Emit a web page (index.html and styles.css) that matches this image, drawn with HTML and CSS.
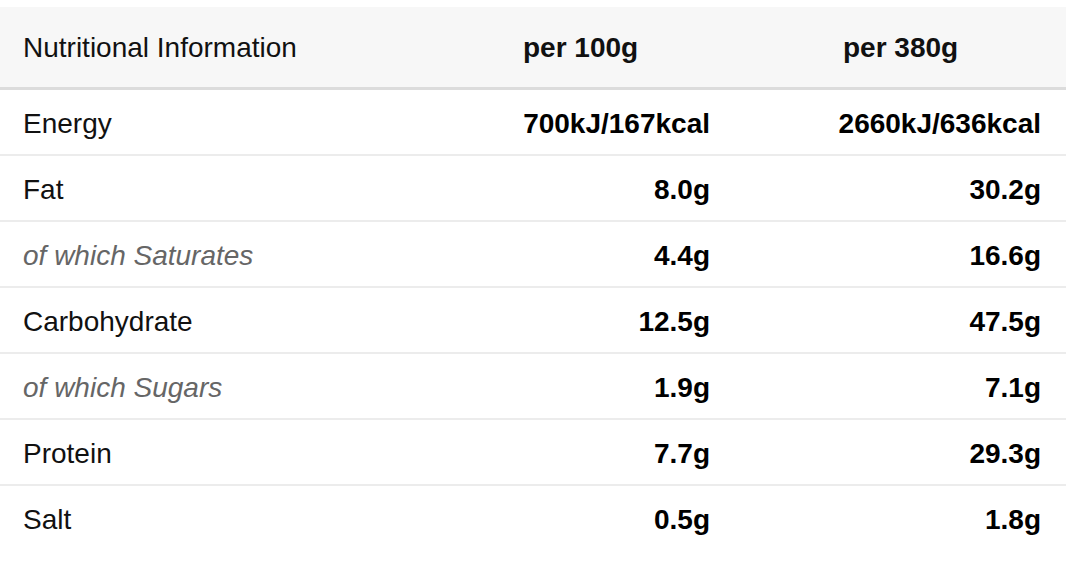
FILE: index.html
```html
<!DOCTYPE html>
<html>
<head>
<meta charset="utf-8">
<link rel="stylesheet" href="styles.css">
</head>
<body>
<div class="nutrition">
  <div class="cell head">Nutritional Information</div>
  <div class="cell head bold">per 100g</div>
  <div class="cell head bold head-last">per 380g</div>

  <div class="cell">Energy</div>
  <div class="cell val">700kJ/167kcal</div>
  <div class="cell val last">2660kJ/636kcal</div>

  <div class="cell">Fat</div>
  <div class="cell val">8.0g</div>
  <div class="cell val last">30.2g</div>

  <div class="cell sub">of which Saturates</div>
  <div class="cell val">4.4g</div>
  <div class="cell val last">16.6g</div>

  <div class="cell">Carbohydrate</div>
  <div class="cell val">12.5g</div>
  <div class="cell val last">47.5g</div>

  <div class="cell sub">of which Sugars</div>
  <div class="cell val">1.9g</div>
  <div class="cell val last">7.1g</div>

  <div class="cell">Protein</div>
  <div class="cell val">7.7g</div>
  <div class="cell val last">29.3g</div>

  <div class="cell end">Salt</div>
  <div class="cell val end">0.5g</div>
  <div class="cell val last end">1.8g</div>
</div>
</body>
</html>
```
FILE: styles.css
```css
html, body {
  margin: 0;
  padding: 0;
  background: #fff;
}
body {
  padding-top: 7px;
  font-family: "Liberation Sans", Arial, sans-serif;
  font-size: 28px;
  color: #111;
}
.nutrition {
  display: grid;
  grid-template-columns: 500px 233px 333px;
  width: 1066px;
}
.cell {
  display: flex;
  align-items: center;
  height: 60px;
  padding: 4px 23px 0;
  border-bottom: 2px solid #ececec;
}
.head {
  height: 78px;
  padding-top: 2px;
  background: #f7f7f7;
  border-bottom: 3px solid #dcdcdc;
}
.bold {
  font-weight: bold;
}
.head-last {
  padding-left: 110px;
}
.val {
  justify-content: flex-end;
  font-weight: bold;
  color: #000;
}
.last {
  padding-right: 25px;
}
.sub {
  font-style: italic;
  color: #666;
}
.end {
  border-bottom: none;
}
```
